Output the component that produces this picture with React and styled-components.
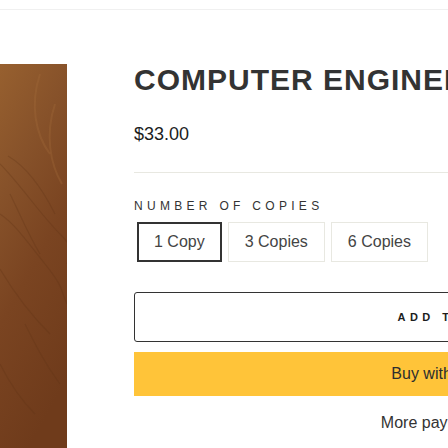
import React, { useState } from "react";
import styled, { createGlobalStyle } from "styled-components";

const GlobalStyle = createGlobalStyle`
  html, body {
    margin: 0;
    padding: 0;
    background: #fff;
    overflow: hidden;
  }
  #root {
    width: 448px;
    height: 448px;
    overflow: hidden;
  }
`;

const copies = ["1 Copy", "3 Copies", "6 Copies"];

function WoodImage() {
  return (
    <svg width="67" height="400" viewBox="0 0 67 400" preserveAspectRatio="none">
      <defs>
        <linearGradient id="wood" x1="0" y1="0" x2="0.3" y2="1">
          <stop offset="0" stopColor="#97602f" />
          <stop offset="0.3" stopColor="#87522a" />
          <stop offset="0.6" stopColor="#7a4421" />
          <stop offset="1" stopColor="#6f3b1b" />
        </linearGradient>
      </defs>
      <rect width="67" height="400" fill="url(#wood)" />
      <g fill="none" stroke="#5c3216" strokeOpacity="0.28" strokeWidth="1.2">
        <path d="M0 100 C20 120 40 150 60 170 S70 190 67 200" />
        <path d="M8 92 C30 105 45 130 55 150" />
        <path d="M0 150 C15 160 25 175 45 200 S60 225 67 240" />
        <path d="M10 130 C20 150 28 170 40 190" />
        <path d="M0 205 C15 230 35 255 50 270" />
        <path d="M25 260 C35 280 45 300 60 320" />
        <path d="M0 300 C10 320 20 335 35 350" />
      </g>
      <g fill="none" stroke="#a66d3a" strokeOpacity="0.3" strokeWidth="2">
        <path d="M40 10 C30 40 35 70 50 90" />
        <path d="M55 40 C45 70 50 100 62 120" />
      </g>
    </svg>
  );
}

export default function App() {
  const [selected, setSelected] = useState(0);

  return (
    <Page>
      <GlobalStyle />
      <Header />
      <Product>
        <ImageColumn>
          <WoodImage />
        </ImageColumn>
        <Info>
          <Title>COMPUTER ENGINEER</Title>
          <Price>$33.00</Price>
          <Rule />
          <Label>NUMBER OF COPIES</Label>
          <Options>
            {copies.map((c, i) => (
              <Option key={c} active={i === selected} onClick={() => setSelected(i)}>
                {c}
              </Option>
            ))}
          </Options>
          <AddButton>ADD TO CART</AddButton>
          <PayButton>
            Buy with <PayLogo>Pay<span>Pal</span></PayLogo>
          </PayButton>
          <MoreLink>More payment options</MoreLink>
        </Info>
      </Product>
    </Page>
  );
}

const Page = styled.div`
  font-family: "Liberation Sans", Arial, sans-serif;
  color: #333;
  width: 448px;
`;

const Header = styled.div`
  height: 9px;
  border-bottom: 1px solid #f0f0f0;
`;

const Product = styled.div`
  display: flex;
  gap: 67px;
  padding-top: 52px;
`;

const ImageColumn = styled.div`
  flex-shrink: 0;
  width: 67px;
  margin-top: 2px;
  line-height: 0;
`;

const Info = styled.div`
  flex-shrink: 0;
  width: 652px;
  display: flex;
  flex-direction: column;
`;

const Title = styled.h1`
  margin: 0;
  font-size: 30px;
  line-height: 36px;
  font-weight: 700;
  letter-spacing: 1px;
  color: #333;
  white-space: nowrap;
`;

const Price = styled.div`
  margin-top: 23px;
  font-size: 18px;
  line-height: 27px;
  color: #1c1d1d;
`;

const Rule = styled.hr`
  margin: 24px 0 0;
  border: none;
  border-top: 1px solid #e8e8e1;
`;

const Label = styled.div`
  margin-top: 24px;
  font-size: 12px;
  line-height: 18px;
  letter-spacing: 4.3px;
  color: #333;
`;

const Options = styled.div`
  display: flex;
  margin-top: 7px;
`;

const Option = styled.button`
  margin: 0 3px;
  height: 40px;
  padding: 0 ${(p) => (p.active ? "15px" : "16px")};
  background: #fff;
  border: ${(p) => (p.active ? "2px solid #333" : "1px solid #e8e8e1")};
  font-family: "Liberation Sans", Arial, sans-serif;
  font-size: 16px;
  color: #444;
  cursor: pointer;
`;

const AddButton = styled.button`
  margin-top: 30px;
  height: 50px;
  border: 1px solid #333;
  border-radius: 3px;
  background: #fff;
  font-family: "Liberation Sans", Arial, sans-serif;
  font-size: 11px;
  font-weight: 700;
  letter-spacing: 4.5px;
  color: #1c1d1d;
  cursor: pointer;
`;

const PayButton = styled.div`
  margin-top: 10px;
  height: 44px;
  background: #ffc439;
  display: flex;
  align-items: center;
  justify-content: center;
  gap: 6px;
  font-size: 16px;
  color: #2c2e2f;
  padding-right: 2px;
`;

const PayLogo = styled.span`
  font-weight: 700;
  font-style: italic;
  font-size: 21px;
  color: #003087;

  span {
    color: #009cde;
  }
`;

const MoreLink = styled.div`
  margin-top: 15px;
  text-align: center;
  font-size: 16px;
  line-height: 24px;
  color: #333;
`;
